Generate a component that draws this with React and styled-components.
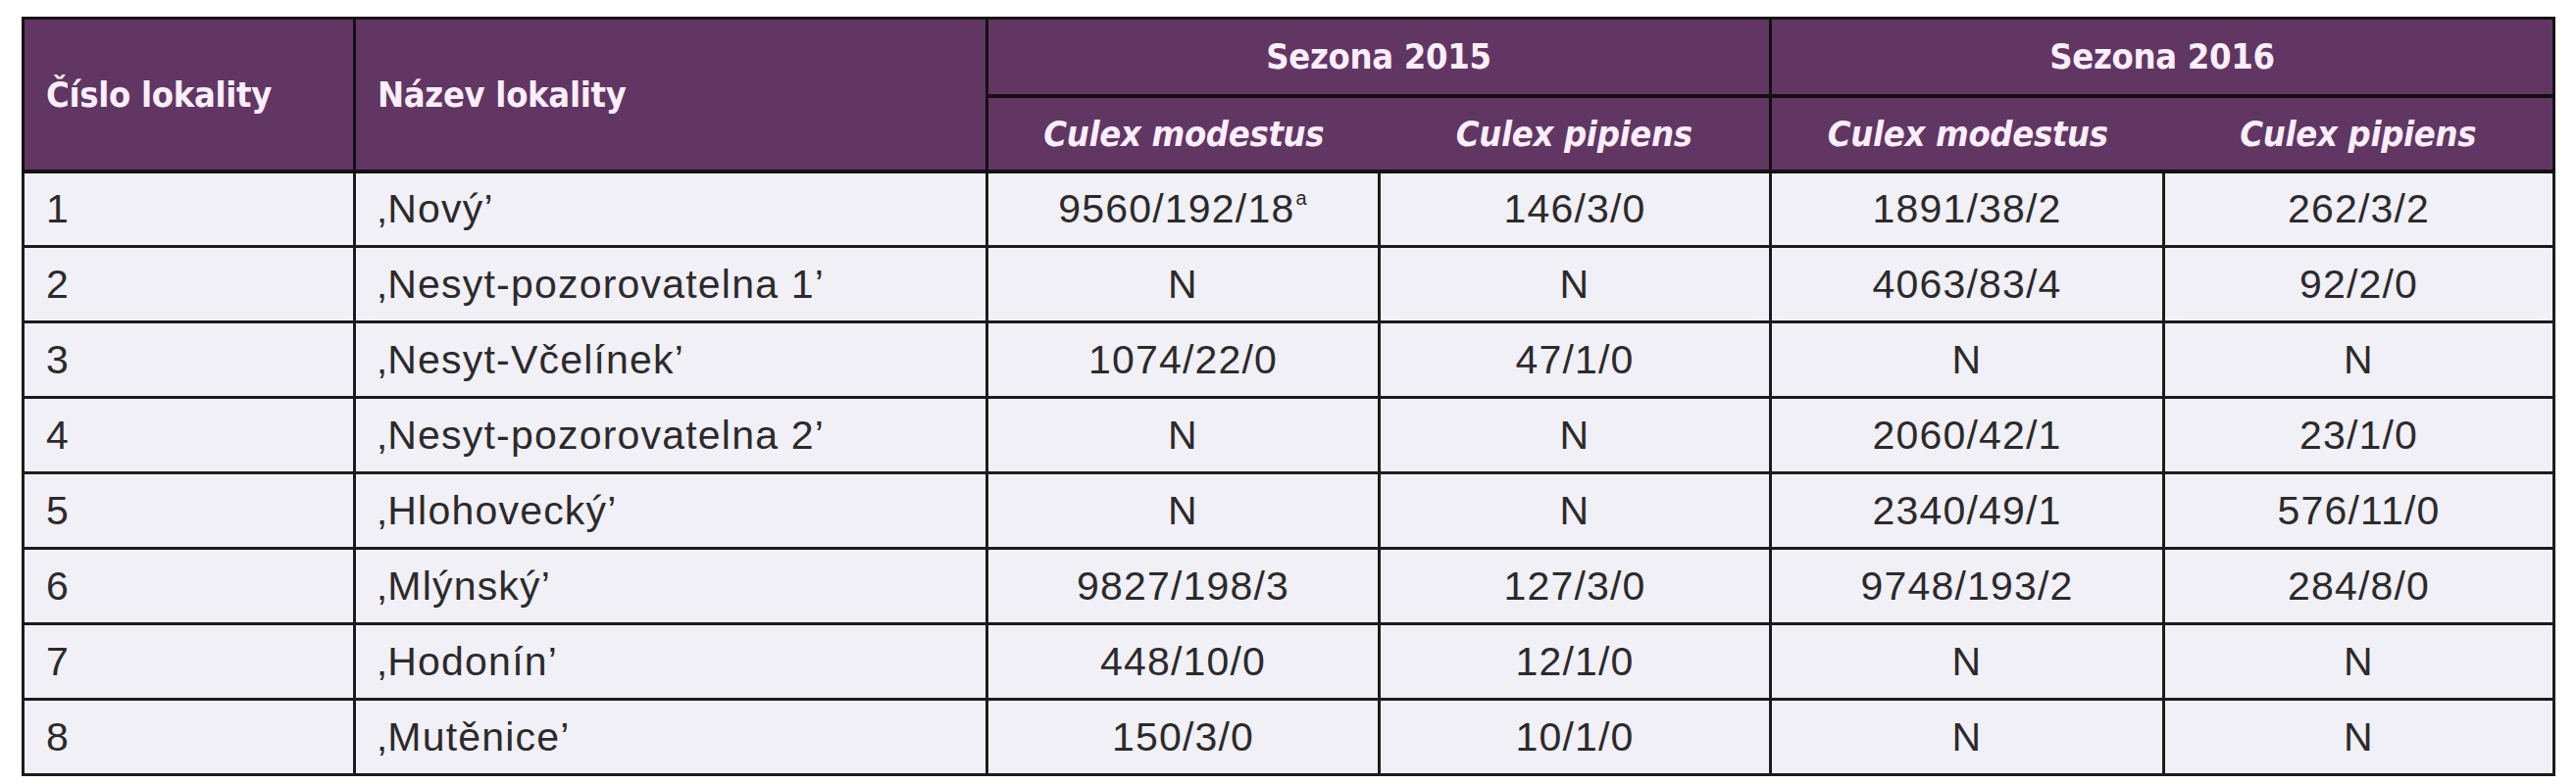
import styled, { createGlobalStyle } from 'styled-components';

const GlobalStyle = createGlobalStyle`
	html, body {
		margin: 0;
		padding: 0;
		background: #ffffff;
	}
`;

const rows = [
	{ id: 1, name: '‚Nový’', m15: '9560/192/18', sup: 'a', p15: '146/3/0', m16: '1891/38/2', p16: '262/3/2' },
	{ id: 2, name: '‚Nesyt-pozorovatelna 1’', m15: 'N', p15: 'N', m16: '4063/83/4', p16: '92/2/0' },
	{ id: 3, name: '‚Nesyt-Včelínek’', m15: '1074/22/0', p15: '47/1/0', m16: 'N', p16: 'N' },
	{ id: 4, name: '‚Nesyt-pozorovatelna 2’', m15: 'N', p15: 'N', m16: '2060/42/1', p16: '23/1/0' },
	{ id: 5, name: '‚Hlohovecký’', m15: 'N', p15: 'N', m16: '2340/49/1', p16: '576/11/0' },
	{ id: 6, name: '‚Mlýnský’', m15: '9827/198/3', p15: '127/3/0', m16: '9748/193/2', p16: '284/8/0' },
	{ id: 7, name: '‚Hodonín’', m15: '448/10/0', p15: '12/1/0', m16: 'N', p16: 'N' },
	{ id: 8, name: '‚Mutěnice’', m15: '150/3/0', p15: '10/1/0', m16: 'N', p16: 'N' },
];

const App = () => {
	return (
		<Page>
			<GlobalStyle />
			<Table>
				<colgroup>
					<col style={{ width: 338 }} />
					<col style={{ width: 645 }} />
					<col style={{ width: 400 }} />
					<col style={{ width: 399 }} />
					<col style={{ width: 401 }} />
					<col style={{ width: 398 }} />
				</colgroup>
				<thead>
					<HeadRow $h={79}>
						<Th rowSpan={2}>Číslo lokality</Th>
						<Th rowSpan={2}>Název lokality</Th>
						<Th colSpan={2} $center>
							Sezona 2015
						</Th>
						<Th colSpan={2} $center>
							Sezona 2016
						</Th>
					</HeadRow>
					<HeadRow $h={77}>
						<Th $center $italic $noRight>
							Culex modestus
						</Th>
						<Th $center $italic $noLeft>
							Culex pipiens
						</Th>
						<Th $center $italic $noRight>
							Culex modestus
						</Th>
						<Th $center $italic $noLeft>
							Culex pipiens
						</Th>
					</HeadRow>
				</thead>
				<tbody>
					{rows.map(row => (
						<Row key={row.id}>
							<Td>{row.id}</Td>
							<Td>{row.name}</Td>
							<Td $center>
								{row.m15}
								{row.sup ? <Sup>{row.sup}</Sup> : null}
							</Td>
							<Td $center>{row.p15}</Td>
							<Td $center>{row.m16}</Td>
							<Td $center>{row.p16}</Td>
						</Row>
					))}
				</tbody>
			</Table>
		</Page>
	);
};
export default App;

const Page = styled.div`
	padding: 17px 0 0 22px;
	width: 2627px;
	height: 800px;
	box-sizing: border-box;
`;

const Table = styled.table`
	border-collapse: collapse;
	table-layout: fixed;
	width: 2581px;
	border: 3px solid #141014;
`;

const HeadRow = styled.tr`
	height: ${props => props.$h}px;
	background: #613662;
`;

const Th = styled.th`
	padding: 0 22px;
	text-align: ${props => (props.$center ? 'center' : 'left')};
	vertical-align: middle;
	font-family: 'DejaVu Sans Condensed', 'DejaVu Sans', sans-serif;
	font-stretch: condensed;
	font-weight: 700;
	font-style: ${props => (props.$italic ? 'italic' : 'normal')};
	font-size: 36px;
	letter-spacing: -0.3px;
	color: #fbeefb;
	border: 3px solid #141014;
	border-bottom-width: 4px;
	border-left-style: ${props => (props.$noLeft ? 'hidden' : 'solid')};
	border-right-style: ${props => (props.$noRight ? 'hidden' : 'solid')};
	white-space: nowrap;
`;

const Row = styled.tr`
	height: 77px;
	background: #f1f0f6;
`;

const Td = styled.td`
	padding: 0 22px;
	text-align: ${props => (props.$center ? 'center' : 'left')};
	vertical-align: middle;
	font-family: 'Liberation Sans Narrow', 'Liberation Sans', sans-serif;
	font-size: 41px;
	font-weight: 400;
	letter-spacing: 1.2px;
	color: #2c2a2c;
	border: 3px solid #1d1b1d;
	white-space: nowrap;
`;

const Sup = styled.sup`
	font-size: 20px;
	vertical-align: 18px;
	margin-left: 1px;
`;
